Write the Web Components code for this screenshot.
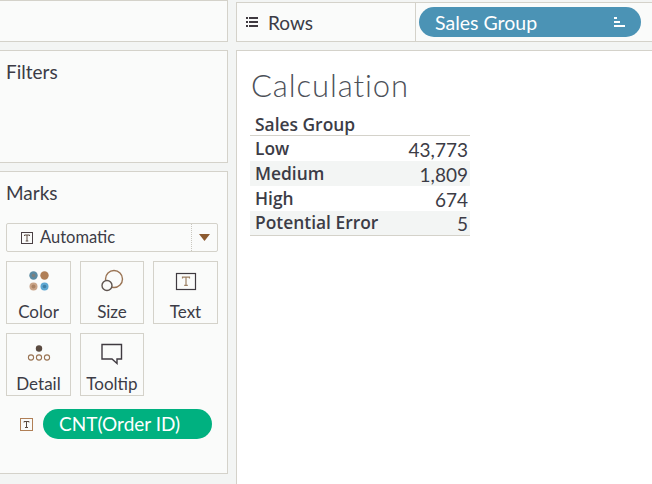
<!DOCTYPE html>
<html>
<head>
<meta charset="utf-8">
<style>
  html, body { margin: 0; height: 100%; overflow: hidden; }
  body {
    background: #f3f5f4;
    color: #3c3c46;
    font-family: Lato, "Open Sans", sans-serif;
  }
  #app {
    display: grid;
    grid-template-columns: 228px 416px;
    column-gap: 8px;
    width: 652px;
    height: 484px;
  }
  #left {
    display: grid;
    grid-template-rows: 42px 113px 303px;
    row-gap: 8px;
  }
  #right {
    display: grid;
    grid-template-rows: 40px 1fr;
    row-gap: 8px;
    padding-top: 2px;
  }
  #cards {
    display: grid;
    grid-template-columns: 65px 64px 65px;
    grid-auto-rows: 63px;
    column-gap: 9px;
    row-gap: 9px;
    margin-top: 9px;
  }
</style>
</head>
<body>
<div id="app">
  <div id="left">
    <tb-panel></tb-panel>
    <tb-panel heading="Filters"></tb-panel>
    <tb-panel heading="Marks">
      <tb-dropdown>Automatic</tb-dropdown>
      <div id="cards">
        <tb-mark-card icon="color">Color</tb-mark-card>
        <tb-mark-card icon="size">Size</tb-mark-card>
        <tb-mark-card icon="text">Text</tb-mark-card>
        <tb-mark-card icon="detail">Detail</tb-mark-card>
        <tb-mark-card icon="tooltip">Tooltip</tb-mark-card>
      </div>
      <tb-encoding>CNT(Order ID)</tb-encoding>
    </tb-panel>
  </div>
  <div id="right">
    <tb-shelf>
      <tb-pill>Sales Group</tb-pill>
    </tb-shelf>
    <tb-view heading="Calculation"></tb-view>
  </div>
</div>

<script>
const ICONS = {
  color: `<svg width="30" height="26" viewBox="0 0 30 26">
      <circle cx="9.5" cy="6.5" r="4.2" fill="#5b8ba3"/><circle cx="9.5" cy="6.5" r="1.8" fill="#7d7f7d"/>
      <circle cx="20.5" cy="6.5" r="4.2" fill="#b07f56"/>
      <circle cx="9.5" cy="17.5" r="4" fill="#c9a488"/><circle cx="9.5" cy="17.5" r="2" fill="#ab8263"/>
      <circle cx="20.5" cy="17.5" r="4" fill="#5da7d2"/><circle cx="20.5" cy="17.5" r="1.8" fill="#3f7fa6"/>
    </svg>`,
  size: `<svg width="26" height="26" viewBox="0 0 26 26" fill="none" stroke-width="1.4">
      <circle cx="15" cy="10" r="8.5" stroke="#9a7454"/>
      <circle cx="8" cy="16.5" r="5" stroke="#5f5550" fill="#fafbfa"/>
    </svg>`,
  text: `<svg width="22" height="20" viewBox="0 0 22 20" fill="none">
      <rect x="1.5" y="1.5" width="19" height="16" stroke="#3f3a40" stroke-width="1.2"/>
      <path d="M7.5 6.5V5.2h7v1.3M11 5.2v8.2M9.2 13.4h3.6" stroke="#9c8064" stroke-width="1.2"/>
    </svg>`,
  detail: `<svg width="26" height="22" viewBox="0 0 26 22" fill="none">
      <circle cx="13" cy="5.5" r="3.2" fill="#5a4a40"/>
      <g stroke="#9a7454" stroke-width="1.1">
        <circle cx="5" cy="14.5" r="2.6"/><circle cx="13" cy="14.5" r="2.6"/><circle cx="21" cy="14.5" r="2.6"/>
      </g>
    </svg>`,
  tooltip: `<svg width="24" height="24" viewBox="0 0 24 24" fill="none">
      <path d="M2 2.5h19.5v14.5h-4.5v4.5l-5-4.5H2z" stroke="#3f3a40" stroke-width="1.4"/>
    </svg>`
};

class TbPanel extends HTMLElement {
  connectedCallback() {
    const heading = this.getAttribute('heading');
    this.attachShadow({ mode: 'open' }).innerHTML = `
      <style>
        :host {
          display: block;
          background: #fafbfa;
          border: 1px solid #d4d2ca;
          border-left: 0;
          box-sizing: border-box;
          padding: 0 9px 0 6px;
        }
        h2 {
          margin: 10px 0 19px;
          font-size: 19px;
          line-height: 22px;
          font-weight: 400;
        }
      </style>
      ${heading ? `<h2>${heading}</h2>` : ''}
      <slot></slot>
    `;
  }
}

class TbDropdown extends HTMLElement {
  connectedCallback() {
    this.attachShadow({ mode: 'open' }).innerHTML = `
      <style>
        :host {
          display: flex;
          align-items: center;
          height: 29px;
          box-sizing: border-box;
          border: 1px solid #d4d2ca;
          border-radius: 2px;
          font-size: 16.5px;
          line-height: 25px;
        }
        svg { display: block; }
        .t { margin: 0 7px 0 14px; }
        .label { flex: 1; }
        .arrow {
          width: 25px;
          height: 100%;
          display: flex;
          align-items: center;
          justify-content: center;
          border-left: 1px dotted #c9c7bf;
        }
      </style>
      <svg class="t" width="12" height="12" viewBox="0 0 12 12" fill="none">
        <rect x=".5" y=".5" width="11" height="11" stroke="#4a4044"/>
        <path d="M3.5 4V3h5v1M6 3v6M4.7 9h2.6" stroke="#5a4a40"/>
      </svg>
      <span class="label"><slot></slot></span>
      <span class="arrow">
        <svg width="11" height="7" viewBox="0 0 11 7"><path d="M0 0h11L5.5 7z" fill="#8c5a30"/></svg>
      </span>
    `;
  }
}

class TbMarkCard extends HTMLElement {
  connectedCallback() {
    const icon = ICONS[this.getAttribute('icon')];
    this.attachShadow({ mode: 'open' }).innerHTML = `
      <style>
        :host {
          display: flex;
          flex-direction: column;
          align-items: center;
          box-sizing: border-box;
          border: 1px solid #d4d2ca;
          font-size: 17px;
          line-height: 20px;
        }
        .icon {
          height: 40px;
          display: flex;
          align-items: center;
          justify-content: center;
        }
        svg { display: block; }
      </style>
      <div class="icon">${icon}</div>
      <slot></slot>
    `;
  }
}

class TbEncoding extends HTMLElement {
  connectedCallback() {
    this.attachShadow({ mode: 'open' }).innerHTML = `
      <style>
        :host {
          display: flex;
          align-items: center;
          margin: 13px 0 0 14px;
          gap: 10px;
        }
        svg { display: block; }
        .pill {
          width: 169px;
          height: 30px;
          box-sizing: border-box;
          padding-left: 16px;
          border-radius: 15px;
          background: #00b180;
          color: #fff;
          font-size: 19px;
          line-height: 30px;
        }
      </style>
      <svg width="13" height="13" viewBox="0 0 13 13" fill="none">
        <rect x=".5" y=".5" width="12" height="12" stroke="#b07f56"/>
        <path d="M4 4.5V3.5h5v1M6.5 3.5v6M5 9.5h3" stroke="#5a4a40"/>
      </svg>
      <div class="pill"><slot></slot></div>
    `;
  }
}

class TbShelf extends HTMLElement {
  connectedCallback() {
    this.attachShadow({ mode: 'open' }).innerHTML = `
      <style>
        :host {
          display: flex;
          background: #fafbfa;
          border: 1px solid #d4d2ca;
          border-right: 0;
          box-sizing: border-box;
          height: 40px;
        }
        .label {
          width: 179px;
          box-sizing: border-box;
          border-right: 1px solid #d4d2ca;
          display: flex;
          align-items: center;
          gap: 10px;
          padding-left: 9px;
          font-size: 19px;
        }
        svg { display: block; }
        .content { padding: 4px 3px; }
      </style>
      <div class="label">
        <svg width="12" height="10" viewBox="0 0 12 10" fill="#3f3a40">
          <path d="M0 0h2v2H0zM3 0h9v2H3zM0 4h2v2H0zM3 4h9v2H3zM0 8h2v2H0zM3 8h9v2H3z"/>
        </svg>
        Rows
      </div>
      <div class="content"><slot></slot></div>
    `;
  }
}

class TbPill extends HTMLElement {
  connectedCallback() {
    this.attachShadow({ mode: 'open' }).innerHTML = `
      <style>
        :host {
          display: flex;
          align-items: center;
          justify-content: space-between;
          width: 222px;
          height: 30px;
          box-sizing: border-box;
          padding: 0 16px;
          border-radius: 15px;
          background: #4b93b5;
          color: #fff;
          font-size: 19.5px;
        }
        svg { display: block; }
      </style>
      <slot></slot>
      <svg width="11" height="10" viewBox="0 0 11 10" fill="#fff">
        <path d="M0 0h3v2H0zM0 4h6v2H0zM0 8h11v2H0z"/>
      </svg>
    `;
  }
}

class TbView extends HTMLElement {
  connectedCallback() {
    const heading = this.getAttribute('heading');
    const rows = [
      ['Low', '43,773'],
      ['Medium', '1,809'],
      ['High', '674'],
      ['Potential Error', '5']
    ];
    this.attachShadow({ mode: 'open' }).innerHTML = `
      <style>
        :host {
          display: block;
          background: #fff;
          border: 1px solid #d4d2ca;
          border-right: 0;
          border-bottom: 0;
          box-sizing: border-box;
          padding: 0 0 0 13px;
        }
        h1 {
          margin: 15px 0 8px 1px;
          font-size: 31px;
          line-height: 38px;
          font-weight: 300;
          letter-spacing: .9px;
          color: #4c5058;
        }
        table {
          width: 220px;
          border-collapse: collapse;
          font-family: "Open Sans", sans-serif;
          font-size: 17.4px;
        }
        th, td { padding: 0 2px 0 5px; line-height: 20px; }
        th {
          height: 23px;
          text-align: left;
          font-weight: 600;
          border-bottom: 1px solid #d4d2ca;
        }
        td { height: 25px; padding-bottom: 1px; box-sizing: border-box; }
        td:first-child { font-weight: 600; }
        td:last-child {
          text-align: right;
          font-size: 19px;
          font-family: Lato, sans-serif;
          padding-top: 3px;
          padding-bottom: 0;
        }
        tr:nth-child(even) td { background: #f3f5f4; }
        tbody tr:last-child td { border-bottom: 1px solid #d4d2ca; }
      </style>
      <h1>${heading}</h1>
      <table>
        <thead><tr><th colspan="2">Sales Group</th></tr></thead>
        <tbody>
          ${rows.map(r => `<tr><td>${r[0]}</td><td>${r[1]}</td></tr>`).join('')}
        </tbody>
      </table>
    `;
  }
}

customElements.define('tb-panel', TbPanel);
customElements.define('tb-dropdown', TbDropdown);
customElements.define('tb-mark-card', TbMarkCard);
customElements.define('tb-encoding', TbEncoding);
customElements.define('tb-shelf', TbShelf);
customElements.define('tb-pill', TbPill);
customElements.define('tb-view', TbView);
</script>
</body>
</html>
